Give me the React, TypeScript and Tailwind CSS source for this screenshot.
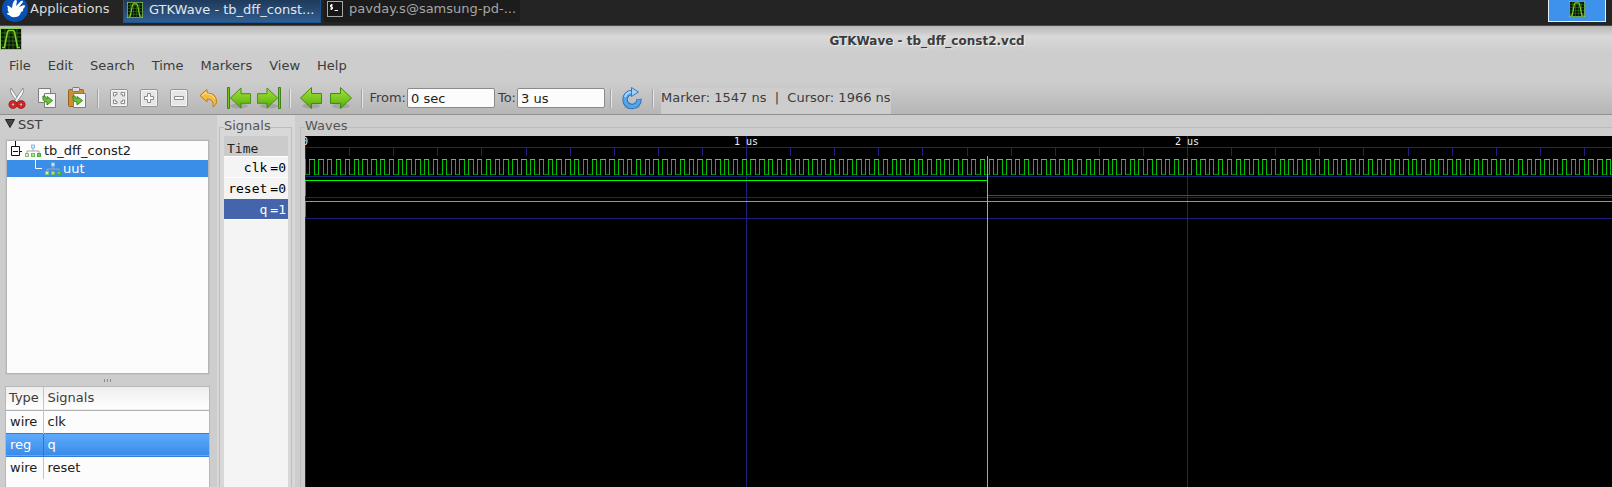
import React, { useState } from "react";

const PX_PER_US = 441;
const TOTAL_NS = 3000;
const WAVE_WIDTH = (TOTAL_NS * PX_PER_US) / 1000;
const toX = (ns: number) => Math.round((ns * PX_PER_US) / 1000);

function WaveLogo({ className }: { className: string }) {
  return (
    <svg viewBox="0 0 22 22" className={className} aria-hidden="true">
      <rect x="0.5" y="0.5" width="21" height="21" fill="#0a1404" stroke="#8fcf5c" />
      <path d="M5 1V21M9 1V21M13 1V21M17 1V21M1 5H21M1 9H21M1 13H21M1 17H21" stroke="#2f6414" fill="none" />
      <path d="M2 19.5H4.5L7.500 4Q7.800 2.500 9 2.500H13Q14.200 2.500 14.500 4L17.500 19.500H20" stroke="#78d428" strokeWidth="1.600" fill="none" />
    </svg>
  );
}

function MouseLogo() {
  return (
    <svg viewBox="0 0 26 26" className="-mt-1 h-[26px] w-[26px] shrink-0" aria-hidden="true">
      <circle cx="13" cy="13" r="13" fill="#0a4fb4" />
      <path d="M5 10Q7 9 8 11L10 12Q10 8 12 5Q14 3 15 5L14 10 19 5Q21 4 21 6L17 11 22 9Q24 10 22 12L21 13Q22 15 19 16Q18 21 13 21Q10 22 7 19Q5 19 5 17L7 17Q5 14 6 12Z" fill="#fff" />
    </svg>
  );
}

function CutIcon() {
  return (
    <svg viewBox="0 0 22 22" className="h-[22px] w-[22px]" aria-hidden="true">
      <path d="M5 1Q3.500 4 6 8L12 16 13.500 14Z" fill="#f1f1f1" stroke="#7d7d7d" strokeWidth="0.800" />
      <path d="M17 1Q18.500 4 16 8L10 16 8.500 14Z" fill="#fafafa" stroke="#7d7d7d" strokeWidth="0.800" />
      <ellipse cx="7" cy="17.500" rx="3" ry="2.700" fill="none" stroke="#8c0909" strokeWidth="3" />
      <ellipse cx="15" cy="17.500" rx="3" ry="2.700" fill="none" stroke="#8c0909" strokeWidth="3" />
      <ellipse cx="7" cy="17.500" rx="3" ry="2.700" fill="none" stroke="#dc2424" strokeWidth="1.800" />
      <ellipse cx="15" cy="17.500" rx="3" ry="2.700" fill="none" stroke="#dc2424" strokeWidth="1.800" />
    </svg>
  );
}

const curl = "M10 10Q9 16 14 16V19L19.500 14.500 14 10.500V13Q12 13 12 10Z";

function CopyIcon() {
  return (
    <svg viewBox="0 0 22 22" className="h-[22px] w-[22px]" aria-hidden="true">
      <path d="M2.500 1.500H14.500V15.500H2.500Z" fill="#f6f6f6" stroke="#7e7e7e" />
      <path d="M8.500 6.500H19.500V20.500H8.500Z" fill="#f6f6f6" stroke="#7e7e7e" />
      <path d={curl} transform="translate(-3 -1)" fill="#6cc238" stroke="#347e15" strokeWidth="0.900" />
    </svg>
  );
}

function PasteIcon() {
  return (
    <svg viewBox="0 0 22 22" className="h-[22px] w-[22px]" aria-hidden="true">
      <rect x="2.500" y="2.500" width="15" height="17" rx="1" fill="#c98f3c" stroke="#94611b" />
      <rect x="6.500" y="0.500" width="7" height="4" rx="1" fill="#ddd" stroke="#777" />
      <path d="M7.500 6.500H19.500V20.500H7.500Z" fill="#f6f6f6" stroke="#7e7e7e" />
      <path d={curl} transform="translate(-3 -1)" fill="#6cc238" stroke="#347e15" strokeWidth="0.900" />
    </svg>
  );
}

function ZoomIcon({ d }: { d: string }) {
  return (
    <svg viewBox="0 0 22 22" className="h-[22px] w-[22px]" aria-hidden="true">
      <rect x="2.500" y="2.500" width="17" height="17" rx="1.500" fill="#e6e6e6" stroke="#949494" />
      <rect x="3.500" y="3.500" width="15" height="15" rx="0.500" fill="none" stroke="#f6f6f6" />
      <path d={d} fill="#fafafa" stroke="#8b8b8b" />
    </svg>
  );
}

function UndoIcon() {
  return (
    <svg viewBox="0 0 22 22" className="h-[22px] w-[22px]" aria-hidden="true">
      <path d="M2 8.500 9 2.500V6Q18.500 6 18.500 15Q18.500 18 15 20Q16.500 12 9 12V15Z" fill="#f5bc42" stroke="#c17d11" strokeLinejoin="round" />
      <path d="M4 8.500 8 5V7Q15 7 17 12" fill="none" stroke="#fbe3a0" />
    </svg>
  );
}

function ArrowIcon({ dir, bar }: { dir: "left" | "right"; bar?: boolean }) {
  return (
    <svg viewBox="0 0 24 24" className="h-6 w-6" aria-hidden="true">
      <defs>
        <linearGradient id="leaf" x1="0" y1="0" x2="0" y2="1">
          <stop offset="0" stopColor="#a6e03c" />
          <stop offset="0.600" stopColor="#76c41c" />
          <stop offset="1" stopColor="#4fa010" />
        </linearGradient>
      </defs>
      <ellipse cx="12" cy="20" rx="9" ry="2.500" fill="#000" opacity="0.120" />
      <g transform={dir === "right" ? "translate(24 0) scale(-1 1)" : undefined}>
        {bar && <path d="M0.500 1.500H2.500V22.500H0.500Z" fill="#76c41c" stroke="#3c8214" />}
        <path
          d="M1.500 12 12.500 1.500V7.500H22.500V17.500H12.500V22.500Z"
          transform={bar ? "translate(2 0.500) scale(0.960)" : undefined}
          fill="url(#leaf)"
          stroke="#3f8d10"
          strokeLinejoin="round"
        />
      </g>
    </svg>
  );
}

function ReloadIcon() {
  return (
    <svg viewBox="0 0 24 24" className="h-6 w-6" aria-hidden="true">
      <ellipse cx="12" cy="21" rx="8" ry="2" fill="#000" opacity="0.120" />
      <path d="M12 6.500A7 7 0 1 0 19 13" fill="none" stroke="#2873b8" strokeWidth="5.500" />
      <path d="M12 6.500A7 7 0 1 0 19 13.500" fill="none" stroke="#55a5ee" strokeWidth="3.600" />
      <path d="M11.500 1.500 18.500 6 11.500 10.500Z" fill="#9fd0f5" stroke="#2873b8" strokeWidth="0.900" />
      <path d="M11 6A7 7 0 0 0 5 11" fill="none" stroke="#a9d6f8" strokeWidth="2" />
    </svg>
  );
}

function ModuleIcon() {
  return (
    <svg viewBox="0 0 16 14" className="h-[14px] w-4 shrink-0" aria-hidden="true">
      <path d="M8 4V7M2 9V7H14V9" stroke="#a5a5a5" fill="none" />
      <rect x="6" y="0.500" width="4" height="4" fill="#8dbdea" />
      <rect x="7" y="1.500" width="2" height="2" fill="#d3e8fa" />
      <rect x="0" y="9" width="4" height="4" fill="#83c56c" />
      <rect x="1" y="10" width="2" height="2" fill="#d2efc2" />
      <rect x="6" y="9" width="4" height="4" fill="#6fbc58" />
      <rect x="7" y="10" width="2" height="2" fill="#b5e39f" />
      <rect x="12" y="9" width="4" height="4" fill="#4cab3f" />
      <rect x="13" y="10" width="2" height="2" fill="#74c862" />
    </svg>
  );
}

function TerminalIcon() {
  return (
    <svg viewBox="0 0 16 16" className="h-4 w-4 shrink-0" aria-hidden="true">
      <rect x="0.500" y="0.500" width="15" height="15" fill="#161616" stroke="#a8a8a8" />
      <path d="M6 4H3.500V6H5.500V8H3M4.500 3V9M7.500 9.500H11" stroke="#eee" fill="none" />
    </svg>
  );
}

function ToolButton({ label, children }: { label: string; children: React.ReactNode }) {
  return (
    <button type="button" aria-label={label} className="flex h-[30px] w-[30px] shrink-0 items-center justify-center">
      {children}
    </button>
  );
}

function Separator() {
  return (
    <div className="flex w-3 shrink-0 justify-center">
      <div className="h-[19px] w-[2px] border-r border-[#e6e6e6] bg-[#a2a2a2]" />
    </div>
  );
}

function clockPaths() {
  const high: string[] = [];
  const low: string[] = [];
  const edges: string[] = ["M0.5 23V39"];
  for (let t = 0; t < TOTAL_NS; t += 20) {
    const a = toX(t);
    const b = toX(t + 10);
    const c = toX(t + 20);
    low.push(`M${a} 38.5H${b}`);
    high.push(`M${b} 23.5H${c + 1}`);
    edges.push(`M${b + 0.5} 23V39M${c + 0.5} 23V39`);
  }
  return { high: high.join(""), low: low.join(""), edges: edges.join("") };
}

function WaveCanvas() {
  const clock = clockPaths();
  const ticks = Array.from({ length: 30 }, (_, i) => toX(i * 100));
  const marker = toX(1547);
  return (
    <svg className="block h-full w-full" role="img" aria-label="Waves" shapeRendering="crispEdges">
      <rect width="100%" height="100%" fill="#000" />
      <g stroke="#20207c">
        <path d={`M0 11.500H${WAVE_WIDTH}M0 40.500H${WAVE_WIDTH}M0 61.500H${WAVE_WIDTH}M0 82.500H${WAVE_WIDTH}`} />
        <path d={ticks.map((x) => `M${x + 0.5} 11V20`).join("")} />
        {[0, 1000, 2000].map((t) => (
          <line key={t} x1={toX(t) + 0.5} x2={toX(t) + 0.5} y1="0" y2="100%" />
        ))}
      </g>
      <path d={clock.low} stroke="#008000" />
      <path d={clock.edges} stroke="#00c000" />
      <path d={clock.high} stroke="#00ff00" />
      <path d="M0.500 44V60M0.500 65V81" stroke="#00c000" />
      <path d={`M0 44.500H${marker}M0 65.500H${WAVE_WIDTH}`} stroke="#00ff00" />
      <path d={`M${marker} 59.500H${WAVE_WIDTH}`} stroke="#008000" />
      <line x1={marker + 0.5} x2={marker + 0.5} y1="20" y2="100%" stroke="#ff8080" />
      <g fill="#f0f0f0" className="font-['DejaVu_Sans_Mono',monospace] text-[10px]" textAnchor="middle">
        <text x="0" y="9">0</text>
        <text x={toX(1000)} y="9">1 us</text>
        <text x={toX(2000)} y="9">2 us</text>
      </g>
    </svg>
  );
}

const signalRows = [
  { name: "clk", value: "=0" },
  { name: "reset", value: "=0" },
  { name: "q", value: "=1" },
];

const facRows = [
  { type: "wire", name: "clk" },
  { type: "reg", name: "q" },
  { type: "wire", name: "reset" },
];

export default function App() {
  const [from, setFrom] = useState("0 sec");
  const [to, setTo] = useState("3 us");
  return (
    <div className="flex h-screen flex-col overflow-hidden bg-[#cdcdcd] font-['DejaVu_Sans',sans-serif] text-[13px] leading-4 text-[#3c3c3c]">
      <header className="flex h-[26px] shrink-0 items-start border-b border-[#4a4a4a] bg-[#242424] text-[#dcdcdc]">
        <button type="button" className="flex w-[123px] shrink-0 items-start gap-[2px] pl-[2px]">
          <MouseLogo />
          <span className="pt-px">Applications</span>
        </button>
        <button type="button" className="flex h-[23px] w-[198px] shrink-0 items-center gap-[6px] border border-t-0 border-[#1f5390] bg-linear-to-b from-[#1f3a5a] to-[#305e90] px-[3px] pb-[3px]">
          <WaveLogo className="h-4 w-4 shrink-0" />
          <span className="truncate text-[#e2e8ee]">GTKWave - tb_dff_const...</span>
        </button>
        <button type="button" className="ml-[3px] flex h-[22px] w-[196px] shrink-0 items-center gap-[6px] bg-[#1c1c1c] px-[3px] pb-1 text-[#a6a6a6]">
          <TerminalIcon />
          <span className="truncate">pavday.s@samsung-pd-...</span>
        </button>
        <button type="button" aria-label="Workspace 1" className="mr-[6px] ml-auto flex h-[22px] w-[58px] shrink-0 justify-center border border-t-0 border-[#e6eef6] bg-[#3f92ec] pt-px">
          <WaveLogo className="h-4 w-4" />
        </button>
      </header>

      <div className="flex h-[26px] shrink-0 items-center bg-linear-to-b from-[#b6b6b6] via-[#d9d9d9] via-40% to-[#cdcdcd]">
        <WaveLogo className="h-[22px] w-[22px] shrink-0" />
        <h1 className="flex-1 pt-[3px] pl-[220px] text-center text-[12px] font-bold [text-shadow:1px_1px_0_#eee]">
          GTKWave - tb_dff_const2.vcd
        </h1>
      </div>

      <nav className="flex h-[30px] shrink-0 items-center gap-[17px] pb-[3px] pl-[9px]">
        {["File", "Edit", "Search", "Time", "Markers", "View", "Help"].map((m) => (
          <button key={m} type="button" className="shrink-0">{m}</button>
        ))}
      </nav>

      <div className="flex h-[33px] shrink-0 items-center border-b border-[#909090] bg-linear-to-b from-[#cdcdcd] to-[#b6b6b6] pl-[2px]">
        <ToolButton label="Cut"><CutIcon /></ToolButton>
        <ToolButton label="Copy"><CopyIcon /></ToolButton>
        <ToolButton label="Paste"><PasteIcon /></ToolButton>
        <Separator />
        <ToolButton label="Zoom fit"><ZoomIcon d="M5.500 9V5.500H9V7.500H7.500V9ZM13 5.500H16.500V9H14.500V7.500H13ZM5.500 13V16.500H9V14.500H7.500V13ZM13 16.500H16.500V13H14.500V14.500H13Z" /></ToolButton>
        <ToolButton label="Zoom in"><ZoomIcon d="M9.500 6.500H12.500V9.500H15.500V12.500H12.500V15.500H9.500V12.500H6.500V9.500H9.500Z" /></ToolButton>
        <ToolButton label="Zoom out"><ZoomIcon d="M6.500 9.500H15.500V12.500H6.500Z" /></ToolButton>
        <ToolButton label="Undo zoom"><UndoIcon /></ToolButton>
        <ToolButton label="Go to start"><ArrowIcon dir="left" bar /></ToolButton>
        <ToolButton label="Go to end"><ArrowIcon dir="right" bar /></ToolButton>
        <Separator />
        <ToolButton label="Previous edge"><ArrowIcon dir="left" /></ToolButton>
        <ToolButton label="Next edge"><ArrowIcon dir="right" /></ToolButton>
        <Separator />
        <label htmlFor="from" className="w-[39px] shrink-0 pr-px text-right whitespace-nowrap">From:</label>
        <input id="from" value={from} onChange={(e) => setFrom(e.target.value)} className="h-5 w-[88px] shrink-0 rounded-[2px] border border-[#8a8a8a] bg-[#fcfcfc] px-[3px] text-[#202020]" />
        <label htmlFor="to" className="w-[22px] shrink-0 pr-px text-right">To:</label>
        <input id="to" value={to} onChange={(e) => setTo(e.target.value)} className="h-5 w-[88px] shrink-0 rounded-[2px] border border-[#8a8a8a] bg-[#fcfcfc] px-[3px] text-[#202020]" />
        <Separator />
        <ToolButton label="Reload"><ReloadIcon /></ToolButton>
        <Separator />
        <output className="ml-[2px] flex h-[26px] shrink-0 items-start self-end bg-[#cdcdcd] pt-[2px] whitespace-pre">
          {"Marker: 1547 ns  |  Cursor: 1966 ns"}
        </output>
      </div>

      <main className="flex min-h-0 flex-1">
        <aside className="flex w-[217px] shrink-0 flex-col pr-[7px] pl-[5px]">
          <button type="button" className="flex h-[25px] shrink-0 items-start gap-[3px] pt-[2px]">
            <svg viewBox="0 0 10 9" className="mt-[2px] h-[9px] w-[10px]" aria-hidden="true">
              <path d="M0.500 0.500H9.500L5 8.500Z" fill="#444" stroke="#222" />
            </svg>
            <span>SST</span>
          </button>
          <ul role="tree" className="mx-px h-[234px] shrink-0 border border-[#b4b4b4] bg-[#fcfcfc] text-[#202020] outline-1 outline-[#c4c4c4]">
            <li role="treeitem" aria-expanded="true">
              <div className="flex h-[19px] items-center gap-[3px] pl-1">
                <svg viewBox="0 0 11 20" className="h-5 w-[11px] shrink-0" aria-hidden="true">
                  <path d="M4.500 0V5M0.500 5.500H8.500V14.500H0.500ZM2 10.500H7M9 10.500H11" fill="none" stroke="#111" />
                </svg>
                <ModuleIcon />
                <span>tb_dff_const2</span>
              </div>
              <ul role="group">
                <li role="treeitem" aria-selected="true" className="flex h-[17px] items-center gap-[2px] bg-[#3a8ee8] pl-7 text-white">
                  <svg viewBox="0 0 8 17" className="h-[17px] w-2 shrink-0" aria-hidden="true">
                    <path d="M0.500 0V8.500H7" fill="none" stroke="#fff" />
                  </svg>
                  <ModuleIcon />
                  <span>uut</span>
                </li>
              </ul>
            </li>
          </ul>
          <div className="flex h-3 shrink-0 items-center justify-center gap-[2px]">
            <i className="h-[3px] w-px bg-[#8a8a8a]" />
            <i className="h-[3px] w-px bg-[#8a8a8a]" />
            <i className="h-[3px] w-px bg-[#8a8a8a]" />
          </div>
          <div className="min-h-0 flex-1 overflow-hidden border border-b-0 border-[#b8b8b8] bg-[#fcfcfc]">
            <table className="w-full table-fixed border-collapse text-left text-[#202020]">
              <thead>
                <tr className="h-[23px] border-b border-[#b0b0b0] bg-linear-to-b from-[#eee] to-white text-[#3c3c3c]">
                  <th className="w-[37px] border-r border-[#c4c4c4] p-0 pl-[3px] font-normal">Type</th>
                  <th className="p-0 pl-1 font-normal">Signals</th>
                </tr>
              </thead>
              <tbody>
                {facRows.map((r) => (
                  <tr
                    key={r.name}
                    className={
                      r.name === "q"
                        ? "h-[23px] border-y border-[#2f7fd8] bg-linear-to-b from-[#5eaafc] to-[#3a8ce8] text-white"
                        : "h-[23px]"
                    }
                  >
                    <td className={r.name === "q" ? "border-r border-[#2f78c8] p-0 pl-1" : "border-r border-[#c4c4c4] p-0 pl-1"}>{r.type}</td>
                    <td className="p-0 pl-1">{r.name}</td>
                  </tr>
                ))}
              </tbody>
            </table>
          </div>
        </aside>

        <section className="flex w-[78px] shrink-0 bg-[#d8d8d8] pt-[3px] pr-[3px] pl-[2px]">
          <fieldset className="flex min-w-0 flex-1 flex-col border border-b-0 border-[#bcbcbc] pr-[3px] pl-[4px]">
            <legend className="-mr-1 h-[18px] text-[#555]">Signals</legend>
            <div className="flex min-h-0 flex-1 flex-col bg-[#f4f4f4] font-['DejaVu_Sans_Mono',monospace] text-black">
              <div className="h-5 shrink-0 bg-[#cbcbcb] pt-[5px] pl-[3px] text-[#222]">Time</div>
              {signalRows.map((s) => (
                <div
                  key={s.name}
                  className={
                    s.name === "q"
                      ? "flex h-[21px] shrink-0 items-center justify-end gap-[3px] border-t border-[#f4f4f4] bg-[#4464ac] pr-[2px] pt-[2px] text-white"
                      : "flex h-[21px] shrink-0 items-center justify-end gap-[3px] border-t border-white pr-[2px] pt-[2px]"
                  }
                >
                  <span>{s.name}</span>
                  <span>{s.value}</span>
                </div>
              ))}
              <div className="h-px shrink-0 bg-white" />
            </div>
          </fieldset>
        </section>

        <section className="flex min-w-0 flex-1 pt-[3px] pl-[5px]">
          <fieldset className="flex min-w-0 flex-1 flex-col border border-r-0 border-b-0 border-[#bcbcbc] pl-[4px]">
            <legend className="h-[18px] text-[#555]">Waves</legend>
            <div className="min-h-0 flex-1 overflow-hidden">
              <WaveCanvas />
            </div>
          </fieldset>
        </section>
      </main>
    </div>
  );
}
